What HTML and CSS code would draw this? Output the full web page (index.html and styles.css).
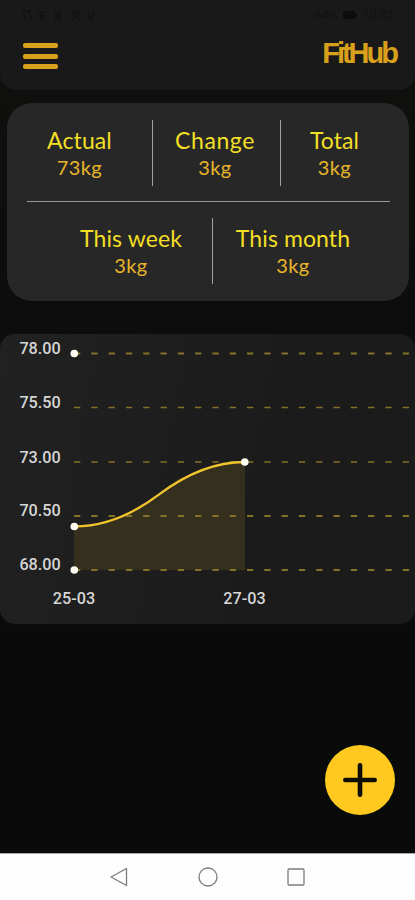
FILE: index.html
```html
<!DOCTYPE html>
<html lang="en">
<head>
    <meta charset="UTF-8">
    <meta name="viewport" content="width=device-width, initial-scale=1.0">
    <title>FitHub</title>
    <link rel="stylesheet" href="styles.css">
</head>
<body>

    <!-- Header -->
    <header class="header">
        <div class="status-bar">
            <svg width="82" height="14" viewBox="0 0 82 14" fill="none" stroke="#121212" stroke-width="1.6">
                <path d="M2 3h8M4 6v6M9 4l3 8M18 4h8M18 8h8M22 3v9M34 8h8M35 4l6 8M41 4l-6 8M51 4h8M52 12l8-8M52 4l8 8M67 5l4 7 3-9"/>
            </svg>
            <div class="status-right">
                <span>64%</span>
                <svg width="14" height="8" viewBox="0 0 14 8"><rect width="12" height="8" fill="#0d0d0d"/><rect x="12" y="2" width="2" height="4" fill="#0d0d0d"/></svg>
                <span>10:32</span>
            </div>
        </div>
        <div class="top-row">
            <button class="menu-btn" aria-label="Menu">
                <span></span>
                <span></span>
                <span></span>
            </button>
            <div class="logo">FitHub</div>
        </div>
    </header>

    <!-- Weight stats -->
    <section class="stats">
        <div class="stats-row">
            <div class="stat stat-actual">
                <p class="stat-label">Actual</p>
                <p class="stat-value">73kg</p>
            </div>
            <div class="stat stat-change">
                <p class="stat-label">Change</p>
                <p class="stat-value">3kg</p>
            </div>
            <div class="stat stat-total">
                <p class="stat-label">Total</p>
                <p class="stat-value">3kg</p>
            </div>
        </div>
        <div class="stats-row stats-bottom">
            <div class="stat stat-week">
                <p class="stat-label">This week</p>
                <p class="stat-value">3kg</p>
            </div>
            <div class="stat stat-month">
                <p class="stat-label">This month</p>
                <p class="stat-value">3kg</p>
            </div>
        </div>
    </section>

    <!-- Chart -->
    <section class="chart">
        <svg width="415" height="290" viewBox="0 334 415 290">
            <path class="area" d="M74 526.5Q116.8 526.5 159.5 494.2Q202.2 462 245 462V570H74Z"/>
            <g class="grid">
                <path d="M74 353.5H409"/>
                <path class="thin" d="M74 407.5H409"/>
                <path class="thin" d="M74 462H409"/>
                <path d="M74 516H409"/>
                <path d="M74 570H409"/>
            </g>
            <path class="line" d="M74 526.5Q116.8 526.5 159.5 494.2Q202.2 462 245 462"/>
            <g class="dots">
                <circle cx="74.3" cy="353.5" r="3.8"/>
                <circle cx="74.3" cy="526.5" r="3.8"/>
                <circle cx="74.3" cy="570" r="3.8"/>
                <circle cx="244.8" cy="462" r="3.8"/>
            </g>
            <g class="axis">
                <text x="60.7" y="354.3">78.00</text>
                <text x="60.7" y="408.4">75.50</text>
                <text x="60.7" y="462.5">73.00</text>
                <text x="60.7" y="516.4">70.50</text>
                <text x="60.7" y="570.4">68.00</text>
            </g>
            <g class="axis axis-x">
                <text x="74" y="603.7">25-03</text>
                <text x="244.5" y="603.7">27-03</text>
            </g>
        </svg>
    </section>

    <!-- Add button -->
    <button class="add-btn" aria-label="Add">
        <svg width="70" height="70" viewBox="0 0 70 70" stroke="#0d0d08" stroke-width="4.6" stroke-linecap="round">
            <path d="M35 20.3v29.4M20.3 35h29.4"/>
        </svg>
    </button>

    <!-- Phone navigation -->
    <nav class="nav-bar">
        <svg width="20" height="20" viewBox="0 0 20 20"><path d="M16.5 1.5v17L1 10z"/></svg>
        <svg width="20" height="20" viewBox="0 0 20 20"><circle cx="10" cy="10" r="9"/></svg>
        <svg width="20" height="20" viewBox="0 0 20 20"><rect x="2" y="2" width="16" height="16" rx="1"/></svg>
    </nav>

</body>
</html>
```
FILE: styles.css
```css
* {
    margin: 0;
    padding: 0;
    box-sizing: border-box;
}
body {
    font-family: Lato, "Noto Sans", sans-serif;
    display: flex;
    flex-direction: column;
    height: 900px;
    overflow: hidden;
    background: linear-gradient(#11110f, #0c0d0c 300px, #0a0a0a 640px, #090a0a);
}

button {
    border: none;
    background: none;
    cursor: pointer;
}

/* Header */
.header {
    height: 90px;
    background: #191919;
    border-radius: 0 0 16px 16px;
}

.status-bar {
    display: flex;
    justify-content: space-between;
    padding: 8px 22px 0 20px;
    height: 36px;
}

.status-right {
    display: flex;
    align-items: center;
    gap: 6px;
    height: 14px;
    font-family: Roboto, sans-serif;
    font-size: 12px;
    color: #121212;
}

.top-row {
    display: flex;
    justify-content: space-between;
    align-items: center;
    height: 40px;
    padding: 0 19px 0 23px;
}

.menu-btn {
    display: flex;
    flex-direction: column;
    gap: 5.5px;
}

.menu-btn span {
    width: 35px;
    height: 5px;
    border-radius: 2px;
    background: #d8a01b;
}

.logo {
    font-family: "Liberation Sans", sans-serif;
    font-size: 29px;
    font-weight: bold;
    letter-spacing: -3px;
    line-height: 34px;
    margin-top: -6px;
    color: #d8a01b;
}

/* Stats card */
.stats {
    margin: 13px 6px 0 7px;
    height: 198px;
    padding: 17px 19px 0 20px;
    border-radius: 25px;
    background: #272727;
}

.stats-row {
    display: flex;
    height: 82px;
    border-bottom: 1.5px solid #989898;
}

.stats-bottom {
    padding-top: 16px;
    border-bottom: none;
}

.stat {
    height: 66px;
    padding-top: 7px;
    text-align: center;
    white-space: nowrap;
}

.stat + .stat {
    border-left: 1.5px solid #a0a0a0;
}

.stat-actual {
    width: 125px;
    padding-right: 20px;
}

.stat-change {
    width: 128px;
    padding-right: 3px;
}

.stat-total {
    width: 109px;
    padding-right: 1px;
}

.stat-week {
    width: 185px;
    padding-left: 23px;
}

.stat-month {
    width: 177px;
    padding-right: 16px;
}

.stat-label {
    font-size: 23px;
    line-height: 27px;
    letter-spacing: 0.1px;
    color: #f3df25;
}

.stat-change .stat-label {
    letter-spacing: 0.6px;
}

.stat-value {
    font-size: 20px;
    line-height: 27px;
    letter-spacing: 0.4px;
    color: #e8b52a;
}

/* Chart card */
.chart {
    margin-top: 33px;
    height: 290px;
    border-radius: 15px;
    background: linear-gradient(100deg, #212121, #1b1b1b 65%);
}

.chart svg {
    display: block;
}

.area {
    fill: #35301e;
}

.grid path {
    stroke: #857229;
    stroke-width: 2;
    stroke-dasharray: 6.3 11;
}

.grid .thin {
    stroke-width: 1.3;
}

.line {
    fill: none;
    stroke: #f0c42d;
    stroke-width: 2.3;
}

.dots {
    fill: #fffef0;
}

.axis {
    font-family: Roboto, sans-serif;
    font-size: 16.2px;
    font-weight: 500;
    fill: #d6d6d6;
    text-anchor: end;
}

.axis-x {
    text-anchor: middle;
}

/* Add button */
.add-btn {
    align-self: flex-end;
    width: 70px;
    height: 70px;
    margin: 121px 20px 0 0;
    border-radius: 50%;
    background: #ffc91f;
}

.add-btn svg {
    display: block;
}

/* Phone navigation */
.nav-bar {
    display: flex;
    justify-content: center;
    align-items: center;
    gap: 68px;
    height: 47px;
    margin-top: auto;
    border-top: 1px solid #aaa;
    background: #fdfdfd;
}

.nav-bar svg {
    fill: none;
    stroke: #7c7c7c;
    stroke-width: 1.3;
    stroke-linejoin: round;
}
```
